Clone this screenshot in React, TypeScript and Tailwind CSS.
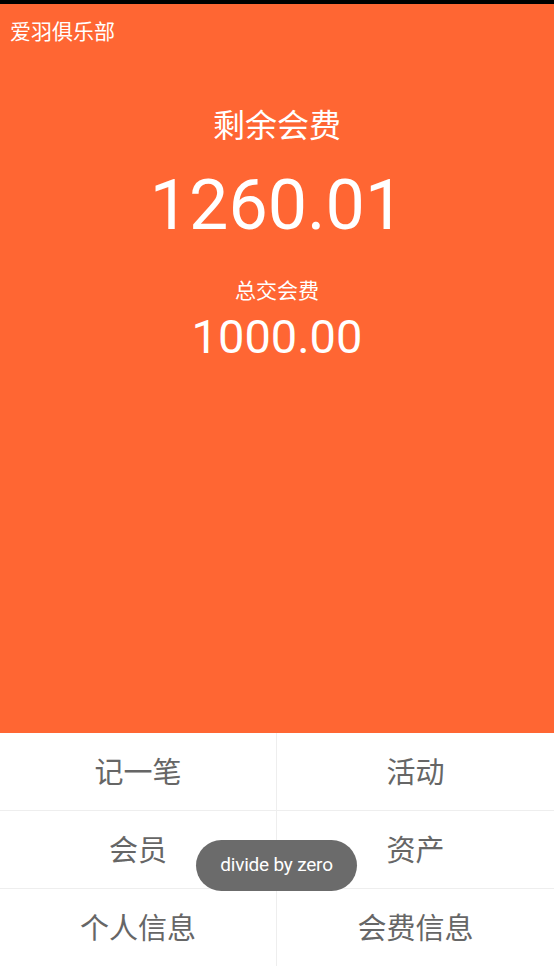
import React from 'react';

const menu = ['记一笔', '活动', '会员', '资产', '个人信息', '会费信息'];

export default function App() {
  return (
    <div
      className="relative w-[554px] h-[966px] overflow-hidden bg-white"
      style={{ fontFamily: 'Roboto, "Noto Sans CJK SC", sans-serif' }}
    >
      <div className="h-[4px] bg-black" />
      <div className="h-[729px] bg-[#ff6633] text-white flex flex-col">
        <div className="pl-[10px] pt-[15px] text-[21px] leading-[26px]">爱羽俱乐部</div>
        <div className="flex flex-col items-center">
          <div className="mt-[62px] text-[32px] leading-[38px]">剩余会费</div>
          <div className="mt-[22px] text-[70px] leading-[76px]">1260.01</div>
          <div className="mt-[35px] text-[21px] leading-[26px]">总交会费</div>
          <div className="mt-[6px] text-[47px] leading-[54px]">1000.00</div>
        </div>
      </div>
      <div className="grid grid-cols-2 grid-rows-[78px_78px_77px]">
        {menu.map((m, i) => (
          <div
            key={m}
            className={`flex items-center justify-center pt-[5px] text-[29px] text-[#666] ${i % 2 === 0 ? 'border-r border-[#eeeeee]' : ''} ${i < 4 ? 'border-b border-[#eeeeee]' : ''}`}
          >
            {m}
          </div>
        ))}
      </div>
      <div className="absolute left-[196px] top-[840px] w-[161px] h-[51px] rounded-full bg-[#6b6b6b] flex items-center justify-center text-white text-[19px] tracking-[-0.2px]">
        divide by zero
      </div>
    </div>
  );
}
